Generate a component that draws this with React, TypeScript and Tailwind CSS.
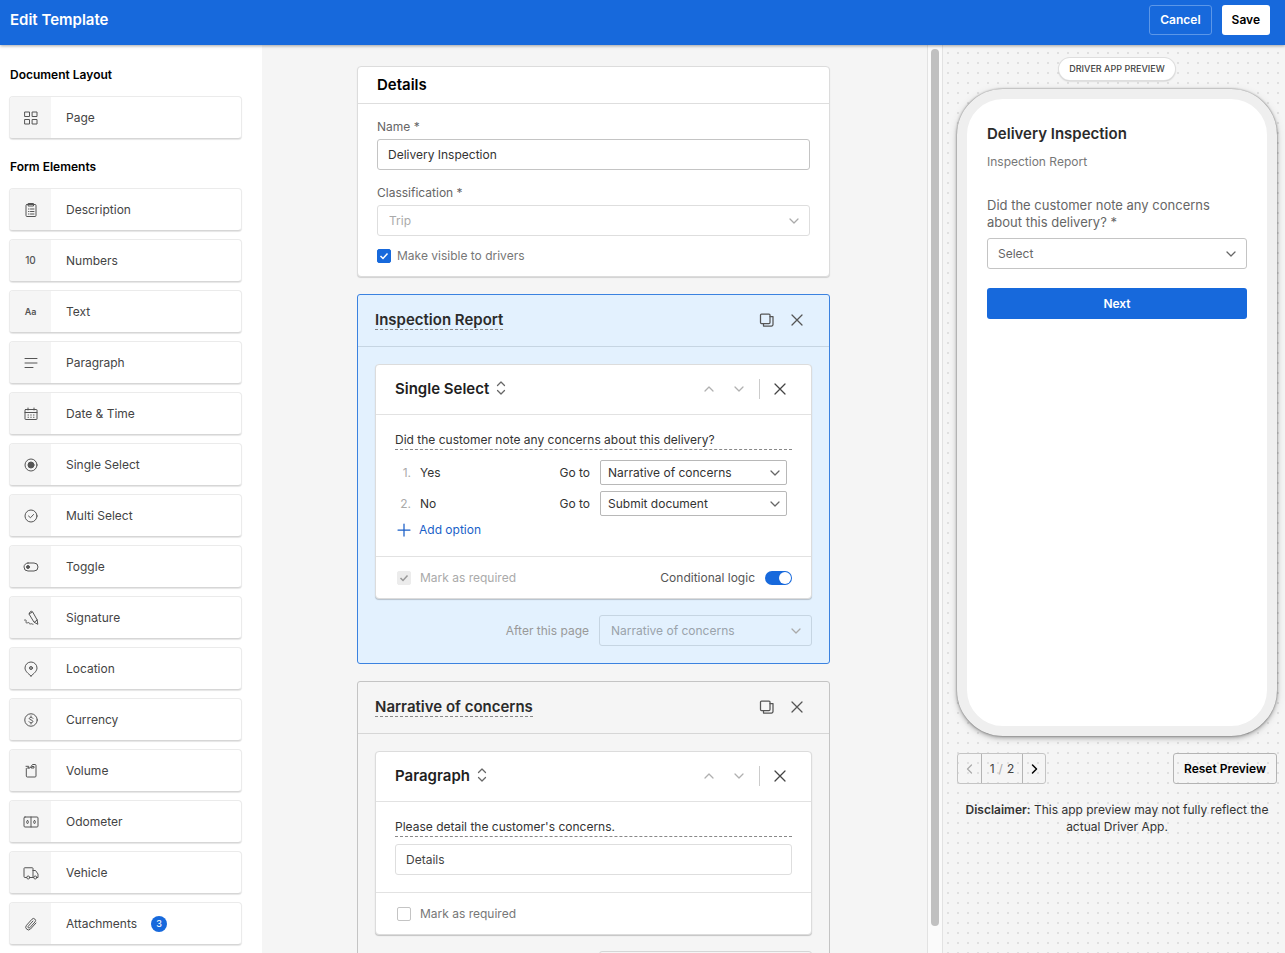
import { useState } from "react";
import type { ReactNode } from "react";

const Icon = ({
  children,
  size = 16,
  weight = 1,
}: {
  children: ReactNode;
  size?: number;
  weight?: number;
}) => (
  <svg
    width={size}
    height={size}
    viewBox={`0 0 ${size} ${size}`}
    fill="none"
    stroke="currentColor"
    strokeWidth={weight}
    strokeLinecap="round"
    strokeLinejoin="round"
    aria-hidden="true"
    className="shrink-0"
  >
    {children}
  </svg>
);

const ChevronDown = () => (
  <Icon size={12} weight={1.25}>
    <path d="M2 4l4 4 4-4" />
  </Icon>
);

const ChevronUp = () => (
  <Icon size={12} weight={1.25}>
    <path d="M2 8l4-4 4 4" />
  </Icon>
);

const CloseIcon = () => (
  <Icon size={12} weight={1.25}>
    <path d="M1 1l10 10M11 1L1 11" />
  </Icon>
);

const CopyIcon = () => (
  <Icon weight={1.25}>
    <rect x="1.5" y="2" width="9.500" height="9.500" rx="1" />
    <path d="M4.500 14h8a1.500 1.500 0 0 0 1.500-1.500V4.500M4.500 11.500V14M11 4.500h3" />
  </Icon>
);

const formElements = [
  {
    label: "Description",
    icon: (
      <Icon>
        <rect x="3" y="2.5" width="10" height="12" rx="1" />
        <path d="M5.500 1.500h5v2.500h-5zM5.500 7h.5M7.500 7h3.500M5.500 9.500h.5M7.500 9.500h3.500M5.500 12h.5M7.500 12h3.500" />
      </Icon>
    ),
  },
  { label: "Numbers", icon: <span className="text-[10px] font-medium">10</span> },
  { label: "Text", icon: <span className="text-[9px] font-semibold">Aa</span> },
  {
    label: "Paragraph",
    icon: (
      <Icon>
        <path d="M2 3.500h12M2 8h12M2 12.500h8" />
      </Icon>
    ),
  },
  {
    label: "Date & Time",
    icon: (
      <Icon>
        <rect x="2" y="3.500" width="12" height="10" rx=".5" />
        <path d="M2 6.500h12M5 2v2M11 2v2" />
        <path d="M5 9h.5M7.750 9h.5M10.500 9h.5M5 11.250h.5M7.750 11.250h.5M10.500 11.250h.5" />
      </Icon>
    ),
  },
  {
    label: "Single Select",
    icon: (
      <Icon>
        <circle cx="8" cy="8" r="6" />
        <circle cx="8" cy="8" r="3" fill="currentColor" />
      </Icon>
    ),
  },
  {
    label: "Multi Select",
    icon: (
      <Icon>
        <circle cx="8" cy="8" r="6" />
        <path d="M5.500 8l2 1.750 3-3.250" />
      </Icon>
    ),
  },
  {
    label: "Toggle",
    icon: (
      <Icon>
        <rect x="1" y="4" width="14" height="8" rx="4" />
        <circle cx="5" cy="8" r="1.500" fill="currentColor" />
      </Icon>
    ),
  },
  {
    label: "Signature",
    icon: (
      <Icon>
        <path d="M6.200 3.700L7 2a1.600 1.600 0 0 1 2.800.2L14.200 10l.6 4.300-3.500-2zM6.200 3.700l3.200-1.500M11.300 12.300l2.900-2.300" />
        <path d="M1.500 10c1.200-.6 2 .2 1.600 1.400s.2 2 1.500 1.400 1.400-.4 1.600.4.8 1 1.600.6 1.300.5 2.200.5" />
      </Icon>
    ),
  },
  {
    label: "Location",
    icon: (
      <Icon>
        <path d="M8 15C5 12.500 2 10 2 7a6 6 0 0 1 12 0c0 3-3 5.500-6 8z" />
        <circle cx="8" cy="7" r="1.500" fill="currentColor" fillOpacity=".5" />
      </Icon>
    ),
  },
  {
    label: "Currency",
    icon: (
      <Icon>
        <circle cx="8" cy="8" r="6.250" />
        <path d="M10 6.250C9.500 5.250 6.250 5 6.250 6.500S9.900 7.800 9.900 9.500 6.500 11 6 9.750M8 4v1.200M8 10.800V12" />
      </Icon>
    ),
  },
  {
    label: "Volume",
    icon: (
      <Icon>
        <path d="M3.300 5.500V13a1 1 0 0 0 1 1h7.700a1 1 0 0 0 1-1V2.500a1 1 0 0 0-1-1H9.500L7 5H4.300" />
        <path d="M3 3.300h2.700V5M9.300 3.500h1.700V5H8.500z" />
      </Icon>
    ),
  },
  {
    label: "Odometer",
    icon: (
      <Icon>
        <rect x="1" y="3" width="14" height="10" rx="1" />
        <path d="M8 3v10" />
        <rect x="3.750" y="6.500" width="1.500" height="3" rx=".75" />
        <rect x="10.750" y="6.500" width="1.500" height="3" rx=".75" />
      </Icon>
    ),
  },
  {
    label: "Vehicle",
    icon: (
      <Icon>
        <path d="M3.500 12.500H2a1 1 0 0 1-1-1V3.500a.75.75 0 0 1 .75-.75h7.500a.75.75 0 0 1 .75.75v9H7M10 5.500h2.500L15 9v3.500h-1M10.500 12.500H10" />
        <circle cx="5.250" cy="12.500" r="1.500" />
        <circle cx="12.250" cy="12.500" r="1.500" />
      </Icon>
    ),
  },
  {
    label: "Attachments",
    count: 3,
    icon: (
      <Icon>
        <path d="M13 7l-5.500 6a2.700 2.700 0 0 1-4-3.700L9 3.200a2 2 0 0 1 3 2.700l-5.200 5.800a1 1 0 0 1-1.600-1.400L10 5" />
      </Icon>
    ),
  },
];

const PaletteItem = ({ label, icon, count }: { label: string; icon: ReactNode; count?: number }) => (
  <button
    type="button"
    className="flex h-[43px] w-full shrink-0 items-center overflow-hidden rounded border border-[#ebebeb] border-b-[#d6d6d6] bg-white text-left text-[#444] shadow-[0_1px_1px_rgba(0,0,0,0.1)]"
  >
    <span className="flex h-full w-[41px] items-center justify-center bg-[#f5f5f5] text-[#555]">
      {icon}
    </span>
    <span className="pl-[15px]">{label}</span>
    {count && (
      <span className="ml-3.5 flex size-4 items-center justify-center rounded-full bg-[#1769dc] text-[9px] font-medium text-white">
        {count}
      </span>
    )}
  </button>
);

type SelectProps = {
  id: string;
  options: string[];
  className: string;
  chevronClass?: string;
  disabled?: boolean;
};

const Select = ({ id, options, className, chevronClass = "right-2.5", disabled }: SelectProps) => (
  <div className="relative w-full">
    <select
      id={id}
      disabled={disabled}
      className={`block w-full appearance-none border opacity-100 outline-none ${className}`}
    >
      {options.map((option) => (
        <option key={option}>{option}</option>
      ))}
    </select>
    <span
      className={`pointer-events-none absolute inset-y-0 flex items-center ${chevronClass} ${
        disabled ? "text-[#aaa]" : "text-[#666]"
      }`}
    >
      <ChevronDown />
    </span>
  </div>
);

const Checkbox = ({ id, checked, disabled }: { id: string; checked?: boolean; disabled?: boolean }) => (
  <span className="grid size-3.5 place-items-center">
    <input
      id={id}
      type="checkbox"
      defaultChecked={checked}
      disabled={disabled}
      className="peer col-start-1 row-start-1 size-3.5 appearance-none rounded-xs border border-[#c4c4c4] bg-white checked:border-[#1769dc] checked:bg-[#1769dc] disabled:border-[#ececec] disabled:bg-[#ececec]"
    />
    <svg
      viewBox="0 0 14 14"
      fill="none"
      stroke="currentColor"
      strokeWidth="1.5"
      className="pointer-events-none invisible col-start-1 row-start-1 size-3.5 text-white peer-checked:visible peer-disabled:text-[#999]"
    >
      <path d="M3.500 7l2.500 2.500 4.500-5" />
    </svg>
  </span>
);

type PageCardProps = { id: string; title: string; next: string; active?: boolean; children: ReactNode };

const PageCard = ({ id, title, next, active, children }: PageCardProps) => (
  <section
    className={`rounded-[3px] border ${
      active ? "border-[#3b82e0] bg-[#e3f1fe]" : "border-[#c4c4c4] bg-[#f5f5f5]"
    }`}
  >
    <div
      className={`flex h-[52px] items-center justify-between border-b pr-[26px] pb-px pl-[17px] ${
        active ? "border-[#c6d5e2]" : "border-[#d6d6d6]"
      }`}
    >
      <h2 className="border-b border-dashed border-[#888] text-[15px] leading-[18px] font-semibold text-[#2b2b2b]">
        {title}
      </h2>
      <div className="flex items-center gap-4 text-[#555]">
        <button type="button" aria-label="Duplicate page">
          <CopyIcon />
        </button>
        <button type="button" aria-label="Remove page">
          <CloseIcon />
        </button>
      </div>
    </div>
    <div className="p-[17px]">
      {children}
      <div className="mt-4 flex items-center justify-end gap-2.5">
        <label htmlFor={`${id}-next`} className="text-[#999]">
          After this page
        </label>
        <div className="w-[213px]">
          <Select
            id={`${id}-next`}
            options={[next]}
            disabled
            className={`h-[31px] rounded-[3px] px-[11px] text-[#9aa3ab] ${
              active ? "border-[#c6d5e2]" : "border-[#d6d6d6]"
            }`}
          />
        </div>
      </div>
    </div>
  </section>
);

const ElementCard = ({ title, children, footer }: { title: string; children: ReactNode; footer: ReactNode }) => (
  <article className="rounded border border-[#dcdcdc] bg-white shadow-[0_1px_1px_rgba(0,0,0,0.2)]">
    <div className="flex h-[50px] items-center justify-between border-b border-[#e2e2e2] pr-[25px] pb-0.5 pl-[19px]">
      <button type="button" className="flex items-center gap-1 text-[15px] font-semibold text-[#1f1f1f]">
        {title}
        <span className="text-[#666]">
          <Icon weight={1.25}>
            <path d="M4.500 5.500L8 2l3.500 3.500M4.500 10.500L8 14l3.500-3.500" />
          </Icon>
        </span>
      </button>
      <div className="flex items-center text-[#b0b0b0]">
        <button type="button" aria-label="Move up">
          <ChevronUp />
        </button>
        <button type="button" aria-label="Move down" className="ml-[18px]">
          <ChevronDown />
        </button>
        <span className="mx-3.5 h-5 w-px bg-[#ccc]" />
        <button type="button" aria-label="Remove element" className="text-[#444]">
          <CloseIcon />
        </button>
      </div>
    </div>
    <div className="px-[19px] pt-4 pb-[17px]">{children}</div>
    <div className="flex h-[42px] items-center justify-between border-t border-[#e2e2e2] pr-[19px] pl-[21px]">
      {footer}
    </div>
  </article>
);

const options = [
  { label: "Yes", target: "Narrative of concerns" },
  { label: "No", target: "Submit document" },
];

const Sidebar = () => (
  <aside className="flex w-[262px] shrink-0 flex-col overflow-y-auto bg-white pt-[22px] pr-5 pb-2 pl-[9px] [scrollbar-width:none]">
    <h2 className="pl-px leading-4 font-semibold text-black">Document Layout</h2>
    <div className="mt-[13px]">
      <PaletteItem
        label="Page"
        icon={
          <Icon>
            <path d="M2 2h4.500v4.500H2zM9.500 2H14v4.500H9.500zM2 9.500h4.500V14H2zM9.500 9.500H14V14H9.500z" />
          </Icon>
        }
      />
    </div>
    <h2 className="mt-5 pl-px leading-4 font-semibold text-black">Form Elements</h2>
    <div className="mt-[13px] flex flex-col gap-2">
      {formElements.map((element) => (
        <PaletteItem key={element.label} {...element} />
      ))}
    </div>
  </aside>
);

const Details = () => (
  <section className="rounded border border-[#dcdcdc] bg-white shadow-[0_1px_1px_rgba(0,0,0,0.15)]">
    <h2 className="flex h-[37px] items-center border-b border-[#dedede] px-[19px] text-[15px] font-semibold text-black">
      Details
    </h2>
    <div className="px-[19px] pt-[15px] pb-3 text-[#666]">
      <label htmlFor="template-name" className="block leading-4">
        Name *
      </label>
      <input
        id="template-name"
        type="text"
        defaultValue="Delivery Inspection"
        className="mt-1 block h-[31px] w-full rounded-[3px] border border-[#c4c4c4] bg-white px-2.5 text-[#333] outline-none"
      />
      <label htmlFor="classification" className="mt-[15px] mb-1 block leading-4">
        Classification *
      </label>
      <Select
        id="classification"
        options={["Trip"]}
        disabled
        className="h-[31px] rounded-[3px] border-[#dedede] bg-white px-[11px] text-[#aaa]"
      />
      <div className="mt-3 flex h-4 items-center gap-1.5">
        <Checkbox id="visible" checked />
        <label htmlFor="visible" className="text-[#777]">
          Make visible to drivers
        </label>
      </div>
    </div>
  </section>
);

const Preview = () => {
  const [page, setPage] = useState(1);

  return (
    <aside className="w-[342px] shrink-0 overflow-y-auto bg-[#f5f5f5] bg-[radial-gradient(circle,#e0e0e0_1px,transparent_1px)] bg-size-[10px_10px] bg-position-[0px_3px] pt-[13px] pr-2 pl-3.5 [scrollbar-width:none]">
      <div className="mx-auto flex h-[22px] w-fit items-center rounded-full bg-white px-2.5 text-[9px] font-medium text-[#444] shadow-[0_0_0_1px_#dedede,0_1px_2px_rgba(0,0,0,0.3)]">
        DRIVER APP PREVIEW
      </div>
      <div className="mt-[9px] h-[647px] rounded-[46px] border-10 border-[#efefef] bg-white px-5 pt-[25px] shadow-[0_0_2px_rgba(0,0,0,0.5),0_2px_4px_rgba(0,0,0,0.25),0_2px_10px_rgba(0,0,0,0.12)]">
        <h2 className="text-[15px] leading-5 font-semibold text-[#2b2b2b]">Delivery Inspection</h2>
        <p className="mt-2.5 leading-4 text-[#777]">Inspection Report</p>
        <label htmlFor="concerns" className="mt-[27px] mb-[7px] block text-[13px] leading-[17px] text-[#666]">
          Did the customer note any concerns about this delivery? *
        </label>
        <Select
          id="concerns"
          options={["Select"]}
          className="h-[31px] rounded-[3px] border-[#c4c4c4] bg-white px-2.5 text-[#666]"
        />
        <button
          type="button"
          onClick={() => setPage(2)}
          className="mt-[19px] h-[31px] w-full rounded-[3px] bg-[#1769dc] font-semibold text-white"
        >
          Next
        </button>
      </div>
      <div className="mt-[17px] flex items-center justify-between">
        <div className="flex h-[31px] items-stretch rounded-[3px] border border-[#c4c4c4] text-[#444]">
          <button
            type="button"
            aria-label="Previous page"
            disabled={page === 1}
            onClick={() => setPage(1)}
            className="flex w-[23px] items-center justify-center disabled:text-[#aaa]"
          >
            <Icon size={12} weight={1.25}>
              <path d="M7.500 2L3.500 6l4 4" />
            </Icon>
          </button>
          <span className="flex w-[42px] items-center justify-center gap-1 border-x border-[#b4b4b4]">
            {page} <span className="text-[#aaa]">/</span> 2
          </span>
          <button
            type="button"
            aria-label="Next page"
            onClick={() => setPage(2)}
            className="flex w-[22px] items-center justify-center text-black"
          >
            <Icon size={12} weight={1.5}>
              <path d="M4.500 2l4 4-4 4" />
            </Icon>
          </button>
        </div>
        <button
          type="button"
          onClick={() => setPage(1)}
          className="h-[31px] rounded-[3px] border border-[#b4b4b4] px-2.5 font-semibold text-black"
        >
          Reset Preview
        </button>
      </div>
      <p className="mt-[17px] text-center leading-[17px] text-[#333]">
        <strong className="font-semibold">Disclaimer:</strong> This app preview may not fully reflect
        the actual Driver App.
      </p>
    </aside>
  );
};

const App = () => {
  return (
    <div className="flex h-screen flex-col bg-[#f5f5f5] font-['Inter',sans-serif] text-xs">
      <header className="z-10 flex h-[45px] shrink-0 items-center justify-between bg-[#1769dc] pr-[15px] pb-[5px] pl-2.5 shadow-[0_1px_3px_rgba(0,0,0,0.35)]">
        <h1 className="text-[15px] font-semibold text-white">Edit Template</h1>
        <div className="flex gap-2.5">
          <button
            type="button"
            className="h-[30px] rounded-[3px] border border-[#5c97e8] px-2.5 font-semibold text-white"
          >
            Cancel
          </button>
          <button type="button" className="h-[30px] rounded-[3px] bg-white px-2.5 font-semibold text-black">
            Save
          </button>
        </div>
      </header>

      <div className="flex min-h-0 flex-1">
        <Sidebar />

        <main className="min-w-0 flex-1 overflow-y-auto pt-[21px] pr-0.5 pb-5 [scrollbar-width:none]">
          <div className="mx-auto flex max-w-[473px] flex-col gap-[17px]">
            <Details />

            <PageCard id="inspection" title="Inspection Report" next="Narrative of concerns" active>
              <ElementCard
                title="Single Select"
                footer={
                  <>
                    <div className="flex items-center gap-[9px]">
                      <Checkbox id="select-required" checked disabled />
                      <label htmlFor="select-required" className="text-[#aaa]">
                        Mark as required
                      </label>
                    </div>
                    <div className="flex items-center gap-2.5">
                      <label htmlFor="conditional" className="text-[#555]">
                        Conditional logic
                      </label>
                      <input
                        id="conditional"
                        type="checkbox"
                        role="switch"
                        defaultChecked
                        className="flex h-3.5 w-[27px] appearance-none items-center rounded-full bg-[#bbb] px-px before:size-3 before:rounded-full before:bg-white checked:justify-end checked:bg-[#1769dc]"
                      />
                    </div>
                  </>
                }
              >
                <p className="border-b border-dashed border-[#888] leading-[18px] text-[#333]">
                  Did the customer note any concerns about this delivery?
                </p>
                <ol className="mt-2.5 flex flex-col gap-1.5 pr-[5px] text-[#333]">
                  {options.map((option, i) => (
                    <li key={option.label} className="flex items-center">
                      <span className="w-4 text-right text-[#aaa]">{i + 1}.</span>
                      <span className="flex-1 pl-[9px]">{option.label}</span>
                      <label htmlFor={`goto-${i}`} className="pr-2.5">
                        Go to
                      </label>
                      <div className="w-[187px]">
                        <Select
                          id={`goto-${i}`}
                          options={[option.target]}
                          chevronClass="right-1.5"
                          className="h-[25px] rounded-xs border-[#b8b8b8] bg-white px-[7px]"
                        />
                      </div>
                    </li>
                  ))}
                </ol>
                <button
                  type="button"
                  className="mt-[5px] flex h-[18px] items-center gap-2 pl-0.5 text-[#1a5fc8]"
                >
                  <Icon size={14} weight={1.25}>
                    <path d="M7 1v12M1 7h12" />
                  </Icon>
                  Add option
                </button>
              </ElementCard>
            </PageCard>

            <PageCard id="narrative" title="Narrative of concerns" next="Submit document">
              <ElementCard
                title="Paragraph"
                footer={
                  <div className="flex items-center gap-[9px]">
                    <Checkbox id="paragraph-required" />
                    <label htmlFor="paragraph-required" className="text-[#777]">
                      Mark as required
                    </label>
                  </div>
                }
              >
                <label
                  htmlFor="narrative-text"
                  className="block border-b border-dashed border-[#888] leading-[18px] text-[#333]"
                >
                  Please detail the customer's concerns.
                </label>
                <input
                  id="narrative-text"
                  type="text"
                  defaultValue="Details"
                  className="mt-[7px] block h-[31px] w-full rounded-[3px] border border-[#dedede] bg-white px-2.5 text-[#444] outline-none"
                />
              </ElementCard>
            </PageCard>
          </div>
        </main>

        {/* scroll track */}
        <div className="w-4 shrink-0 border-x border-[#e2e2e2] bg-[#fafafa] px-[3px] pt-1">
          <div className="h-[97%] rounded-full bg-[#c0c0c0]" />
        </div>

        <Preview />
      </div>
    </div>
  );
};

export default App;
